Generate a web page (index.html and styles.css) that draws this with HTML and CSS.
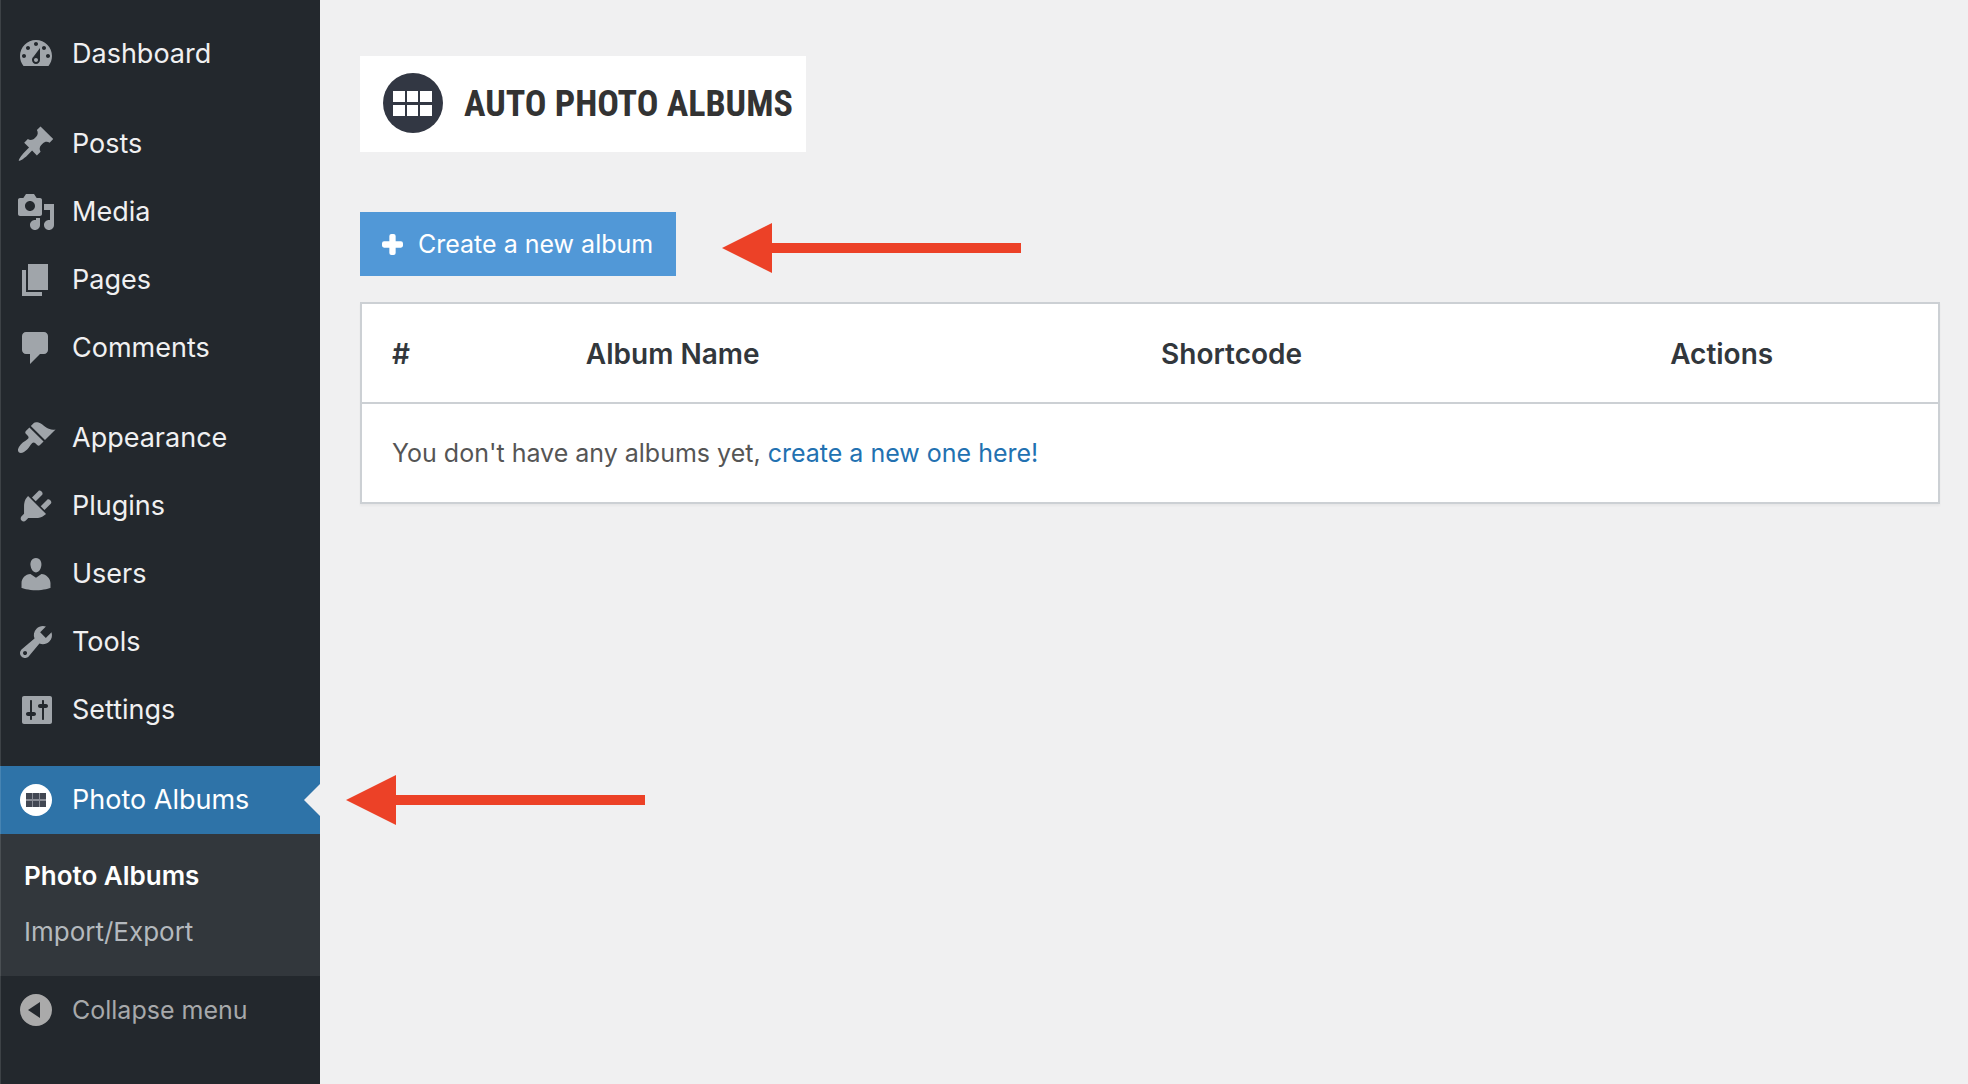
FILE: index.html
```html
<!DOCTYPE html>
<html lang="en">
<head>
<meta charset="utf-8">
<meta name="viewport" content="width=device-width, initial-scale=1">
<title>Auto Photo Albums</title>
<link rel="stylesheet" href="styles.css">
</head>
<body>
<div class="layout">
  <nav class="sidebar" aria-label="Main menu">
    <ul class="menu">
      <li><a class="menu-link" href="#"><svg class="icon" viewBox="0 0 20 20"><path d="M3.76 16h12.48c1.1-1.37 1.76-3.11 1.76-5 0-4.42-3.58-8-8-8s-8 3.58-8 8c0 1.89.66 3.63 1.76 5zM10 4c.55 0 1 .45 1 1s-.45 1-1 1-1-.45-1-1 .45-1 1-1zM6 6c.55 0 1 .45 1 1s-.45 1-1 1-1-.45-1-1 .45-1 1-1zm8 0c.55 0 1 .45 1 1s-.45 1-1 1-1-.45-1-1 .45-1 1-1zm-5.37 5.55L12 7v6c0 1.1-.9 2-2 2s-2-.9-2-2c0-.57.24-1.08.63-1.45zM4 10c.55 0 1 .45 1 1s-.45 1-1 1-1-.45-1-1 .45-1 1-1zm12 0c.55 0 1 .45 1 1s-.45 1-1 1-1-.45-1-1 .45-1 1-1zm-5 3c0-.55-.45-1-1-1s-1 .45-1 1 .45 1 1 1 1-.45 1-1z"/></svg>Dashboard</a></li>
      <li class="group-start"><a class="menu-link" href="#"><svg class="icon" viewBox="0 0 20 20"><path d="M10.44 3.02l1.82-1.82 6.36 6.35-1.83 1.82c-1.05-.68-2.48-.57-3.41.36l-.75.75c-.92.93-1.04 2.35-.35 3.41l-1.83 1.82-2.41-2.41-2.8 2.79c-.42.42-3.38 2.71-3.8 2.29s1.86-3.39 2.28-3.81l2.79-2.79L4.1 9.36l1.83-1.82c1.05.69 2.48.57 3.4-.36l.75-.75c.93-.92 1.05-2.35.36-3.41z"/></svg>Posts</a></li>
      <li><a class="menu-link" href="#"><svg class="icon" viewBox="0 0 20 20"><path d="M13 11V4c0-.55-.45-1-1-1h-1.67L9 1H5L3.67 3H2c-.55 0-1 .45-1 1v7c0 .55.45 1 1 1h10c.55 0 1-.45 1-1zM7 4.5c1.38 0 2.5 1.12 2.5 2.5S8.38 9.5 7 9.5 4.5 8.38 4.5 7 5.62 4.5 7 4.5zM14 6h5v10.5c0 1.38-1.12 2.5-2.5 2.5S14 17.88 14 16.5s1.12-2.5 2.5-2.5c.17 0 .34.02.5.05V9h-3V6zm-4 8.05V13h2v3.5c0 1.38-1.12 2.5-2.5 2.5S7 17.88 7 16.5 8.12 14 9.5 14c.17 0 .34.02.5.05z"/></svg>Media</a></li>
      <li><a class="menu-link" href="#"><svg class="icon" viewBox="0 0 20 20"><path d="M6 15V2h10v13H6zm-1 1h8v2H3V5h2v11z"/></svg>Pages</a></li>
      <li><a class="menu-link" href="#"><svg class="icon" viewBox="0 0 20 20"><path d="M5 2h9c1.1 0 2 .9 2 2v7c0 1.1-.9 2-2 2h-2l-5 5v-5H5c-1.1 0-2-.9-2-2V4c0-1.1.9-2 2-2z"/></svg>Comments</a></li>
      <li class="group-start"><a class="menu-link" href="#"><svg class="icon" viewBox="0 0 20 20"><path d="M14.48 11.06L7.41 3.99l1.5-1.5c.5-.56 2.3-.47 3.51.32 1.21.8 1.43 1.28 2.91 2.1 1.18.64 2.45 1.26 4.45.85zm-.71.71L6.7 4.7 4.93 6.47c-.39.39-.39 1.02 0 1.41l1.06 1.06c.39.39.39 1.03 0 1.42-.6.6-1.43 1.11-2.21 1.69-.35.26-.7.53-1.01.84C1.43 14.23.4 16.08 1.4 17.07c.99 1 2.84-.03 4.18-1.36.31-.31.58-.66.85-1.02.57-.78 1.08-1.61 1.69-2.21.39-.39 1.02-.39 1.41 0l1.06 1.06c.39.39 1.02.39 1.41 0z"/></svg>Appearance</a></li>
      <li><a class="menu-link" href="#"><svg class="icon" viewBox="0 0 20 20"><path d="M13.11 4.36L9.87 7.6 8 5.73l3.24-3.24c.35-.34 1.05-.2 1.56.32.52.51.66 1.21.31 1.55zm-8 1.77l.91-1.12 9.01 9.01-1.19.84c-.71.71-2.63 1.16-3.82 1.16H6.14L4.9 17.26c-.59.59-1.54.59-2.12 0-.59-.58-.59-1.53 0-2.12l1.24-1.24v-3.88c0-1.13.4-3.19 1.09-3.89zm7.26 3.97l3.24-3.24c.34-.35 1.04-.21 1.55.31.52.51.66 1.21.31 1.55l-3.24 3.25z"/></svg>Plugins</a></li>
      <li><a class="menu-link" href="#"><svg class="icon" viewBox="0 0 20 20"><path d="M10 9.25c-2.27 0-2.73-3.44-2.73-3.44C7 4.02 7.82 2 9.97 2c2.16 0 2.98 2.02 2.71 3.81 0 0-.41 3.44-2.68 3.44zm0 2.57L12.72 10c2.39 0 4.52 2.33 4.52 4.53v2.49s-3.65 1.13-7.24 1.13c-3.65 0-7.24-1.13-7.24-1.13v-2.49c0-2.25 1.94-4.48 4.47-4.48z"/></svg>Users</a></li>
      <li><a class="menu-link" href="#"><svg class="icon" viewBox="0 0 20 20"><path d="M16.68 9.77c-1.34 1.34-3.3 1.67-4.95.99l-5.41 6.52c-.99.99-2.59.99-3.58 0s-.99-2.59 0-3.57l6.52-5.42c-.68-1.65-.35-3.61.99-4.95 1.28-1.28 3.12-1.62 4.72-1.06l-2.89 2.89 2.82 2.82 2.86-2.87c.53 1.58.18 3.39-1.08 4.65zM3.81 16.21c.4.39 1.04.39 1.43 0 .4-.4.4-1.04 0-1.43-.39-.4-1.03-.4-1.43 0-.39.39-.39 1.03 0 1.43z"/></svg>Tools</a></li>
      <li><a class="menu-link" href="#"><svg class="icon" viewBox="0 0 20 20"><path d="M18 16V4c0-.55-.45-1-1-1H4c-.55 0-1 .45-1 1v12c0 .55.45 1 1 1h13c.55 0 1-.45 1-1zM8 11h1c.55 0 1 .45 1 1s-.45 1-1 1H8v1.5c0 .28-.22.5-.5.5s-.5-.22-.5-.5V13H6c-.55 0-1-.45-1-1s.45-1 1-1h1V5.5c0-.28.22-.5.5-.5s.5.22.5.5V11zm5-2h-1c-.55 0-1-.45-1-1s.45-1 1-1h1V5.5c0-.28.22-.5.5-.5s.5.22.5.5V7h1c.55 0 1 .45 1 1s-.45 1-1 1h-1v5.5c0 .28-.22.5-.5.5s-.5-.22-.5-.5V9z"/></svg>Settings</a></li>
      <li class="group-start">
        <div class="current">
          <a class="menu-link menu-link-current" href="#" aria-current="page"><svg class="icon" viewBox="0 0 40 40"><circle cx="20" cy="20" r="16" fill="#fff"/><path fill="#424752" d="M10 13h6v6h-6zM17 13h6v6h-6zM24 13h6v6h-6zM10 21h6v6h-6zM17 21h6v6h-6zM24 21h6v6h-6z"/><path fill="#8a8d96" d="M16 13h1v14h-1zM23 13h1v14h-1zM10 19h20v2H10z"/></svg>Photo Albums</a>
          <svg class="arrow arrow-menu" viewBox="0 0 299 50" aria-hidden="true"><path d="M0 25L50 0v20h249v10H50v20z"/></svg>
        </div>
        <ul class="submenu">
          <li><a class="submenu-link submenu-link-current" href="#">Photo Albums</a></li>
          <li><a class="submenu-link" href="#">Import/Export</a></li>
        </ul>
      </li>
    </ul>
    <button class="collapse" type="button"><svg class="icon" viewBox="0 0 40 40"><path fill-rule="evenodd" d="M20 4a16 16 0 1 0 0 32 16 16 0 0 0 0-32zM24 12v16l-12-8z"/></svg>Collapse menu</button>
  </nav>
  <main class="content">
    <h1 class="logo">
      <svg class="logo-mark" viewBox="0 0 62 62" aria-hidden="true"><circle cx="31" cy="30" r="30" fill="#323743"/><path fill="#fff" d="M11 18h12v11H11zM25 18h11v11H25zM38 18h12v11H38zM11 32h12v11H11zM25 32h11v11H25zM38 32h12v11H38z"/></svg>
      <span>AUTO PHOTO ALBUMS</span>
    </h1>
    <div class="toolbar">
      <button class="create" type="button"><svg class="plus" viewBox="0 0 20 20" aria-hidden="true"><path d="M9 0h2q2 0 2 2v5h5q2 0 2 2v2q0 2-2 2h-5v5q0 2-2 2H9q-2 0-2-2v-5H2q-2 0-2-2V9q0-2 2-2h5V2q0-2 2-2z"/></svg>Create a new album</button>
      <svg class="arrow arrow-create" viewBox="0 0 299 50" aria-hidden="true"><path d="M0 25L50 0v20h249v10H50v20z"/></svg>
    </div>
    <table class="albums">
      <thead>
        <tr><th class="col-number" scope="col">#</th><th class="col-name" scope="col">Album Name</th><th class="col-code" scope="col">Shortcode</th><th scope="col">Actions</th></tr>
      </thead>
      <tbody>
        <tr><td colspan="4">You don't have any albums yet, <a href="#">create a new one here!</a></td></tr>
      </tbody>
    </table>
  </main>
</div>
</body>
</html>
```
FILE: styles.css
```css
* {
  box-sizing: border-box;
}

body {
  margin: 0;
  background: #f0f0f1;
  color: #50575e;
  font-family: Inter, "Liberation Sans", sans-serif;
  font-size: 25px;
  line-height: 36px;
}

ul {
  margin: 0;
  padding: 0;
  list-style: none;
}

a {
  text-decoration: none;
}

.layout {
  display: flex;
  min-height: 100vh;
}

/* Sidebar */
.sidebar {
  position: relative;
  flex: none;
  width: 320px;
  padding-top: 20px;
  background: #23282d;
}

.sidebar::after {
  content: "";
  position: absolute;
  inset: 0 auto 0 0;
  width: 1px;
  background: rgba(255, 255, 255, 0.12);
}

.group-start {
  margin-top: 22px;
}

.menu-link {
  display: flex;
  align-items: center;
  gap: 16px;
  height: 68px;
  padding-left: 16px;
  color: #f0f0f1;
  font-size: 27px;
}

.icon {
  flex: none;
  width: 40px;
  height: 40px;
  fill: #a0a5aa;
}

.current {
  position: relative;
}

.menu-link-current {
  background: #2e73a8;
  color: #fff;
}

/* Notch pointing from the page into the current item */
.current::after {
  content: "";
  position: absolute;
  top: 18px;
  right: 0;
  border: 16px solid transparent;
  border-left-width: 0;
  border-right-color: #f0f0f1;
}

.submenu {
  padding: 14px 0 16px;
  background: #32373c;
}

.submenu-link {
  display: block;
  padding: 10px 24px;
  color: #b4b9be;
  font-size: 26px;
}

.submenu-link-current {
  color: #fff;
  font-weight: 600;
}

.collapse {
  display: flex;
  align-items: center;
  gap: 16px;
  width: 100%;
  height: 68px;
  padding: 0 0 0 16px;
  border: 0;
  background: none;
  color: #a7a9ab;
  font: inherit;
}

.collapse .icon {
  fill: #aaa;
}

/* Content */
.content {
  flex: 1;
  min-width: 0;
  padding: 56px 28px 40px 40px;
}

.logo {
  display: flex;
  align-items: center;
  gap: 20px;
  width: 446px;
  height: 96px;
  margin: 0 0 60px;
  padding-left: 22px;
  background: #fff;
  color: #333;
  font-family: "Roboto Condensed", "Liberation Sans Narrow", "Liberation Sans", sans-serif;
  font-size: 36px;
  font-weight: 700;
  white-space: nowrap;
}

.logo-mark {
  flex: none;
  width: 62px;
  height: 62px;
}

.toolbar {
  position: relative;
  display: flex;
  margin-bottom: 26px;
}

.create {
  display: flex;
  align-items: center;
  gap: 15px;
  height: 64px;
  padding: 0 23px 0 22px;
  border: 0;
  background: #5198d7;
  color: #fff;
  font: inherit;
}

.plus {
  width: 21px;
  height: 21px;
  fill: #fff;
}

.arrow {
  position: absolute;
  width: 299px;
  height: 50px;
  fill: #ec4127;
}

.arrow-create {
  top: 11px;
  left: 362px;
}

.arrow-menu {
  top: 9px;
  left: 346px;
}

.albums {
  width: 100%;
  border: 2px solid #ccd0d4;
  border-spacing: 0;
  background: #fff;
  box-shadow: 0 2px 2px rgba(0, 0, 0, 0.04);
  color: #555;
  table-layout: fixed;
}

.albums th,
.albums td {
  height: 98px;
  padding: 0 30px;
  text-align: left;
}

.albums th {
  height: 100px;
  padding-top: 2px;
  border-bottom: 2px solid #ccd0d4;
  color: #32373c;
  font-size: 28px;
  font-weight: 600;
}

.albums a {
  color: #2271b1;
}

.col-number {
  width: 12.3%;
}

.col-name {
  width: 36.5%;
}

.col-code {
  width: 32.3%;
}
```
